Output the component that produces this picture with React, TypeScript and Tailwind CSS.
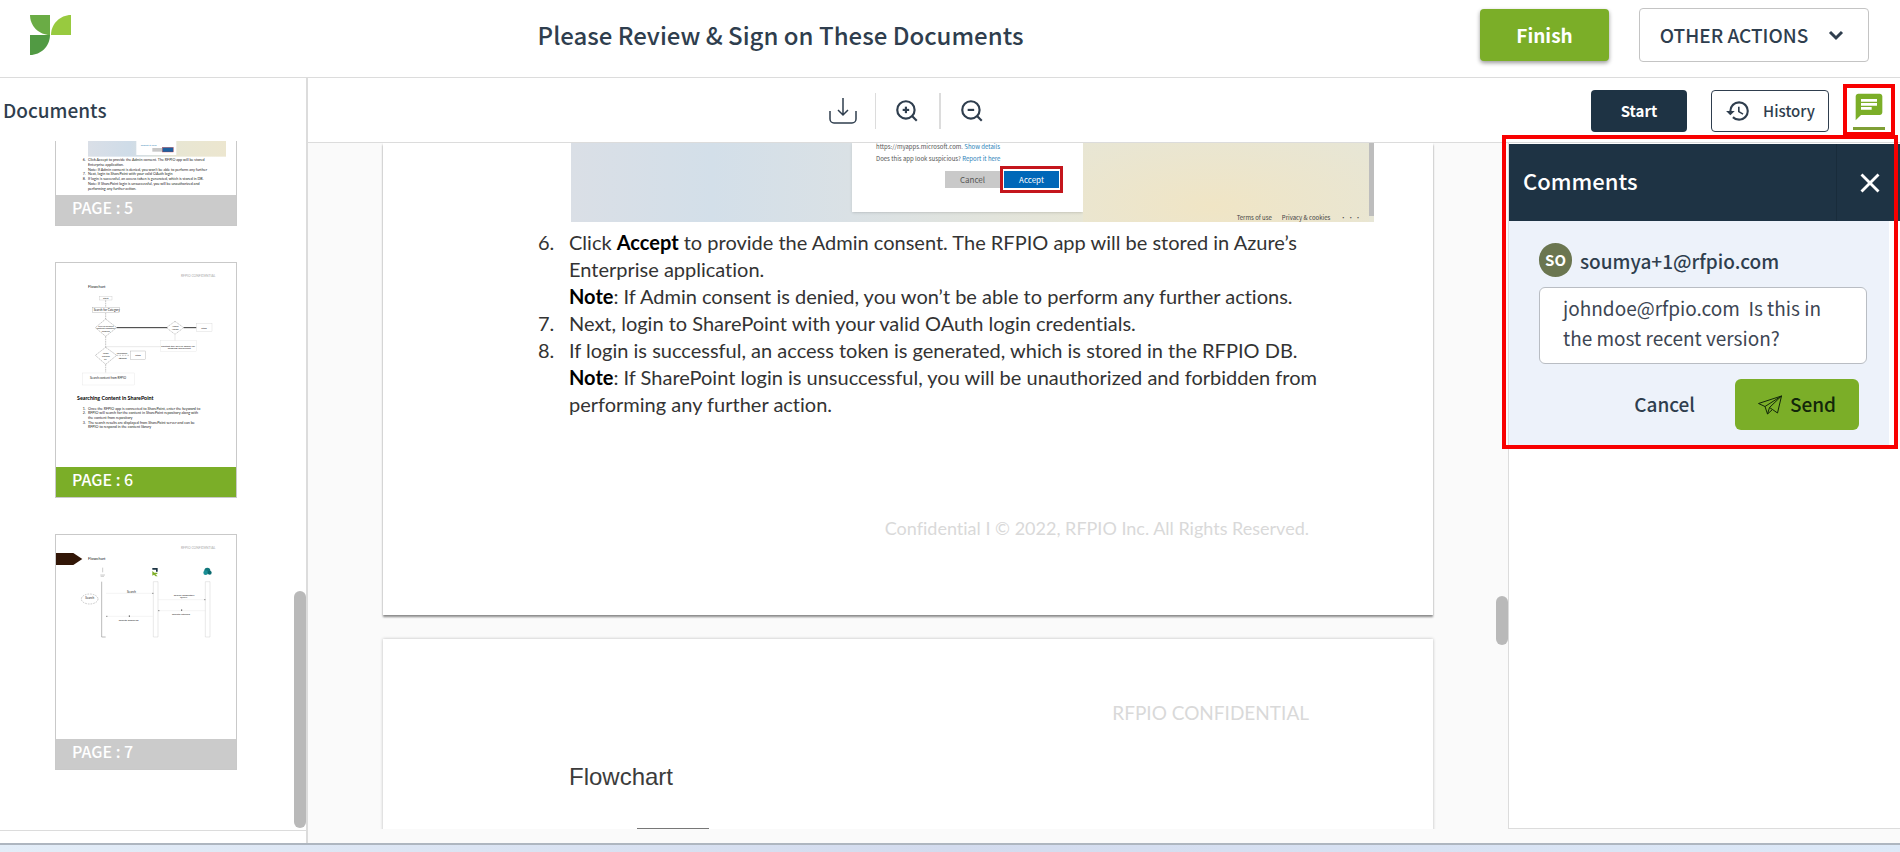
import React from 'react';
import { ChevronDown, X, ZoomIn, ZoomOut } from 'lucide-react';
import { MdChat, MdHistory } from 'react-icons/md';

type Thumb = {
    page: number;
    active: boolean;
    art: React.ReactNode;
};

function Logo() {
    return (
        <svg viewBox="0 0 41 41" className="w-[41px] h-[41px]" role="img" aria-label="RFPIO">
            <path d="M0 0h20v20C9 20 0 11 0 0z" fill="#6aac45" />
            <path d="M21 20C21 9 30 0 41 0v20z" fill="#98ca3f" />
            <path d="M0 20h20c0 11-9 20-20 20z" fill="#519a43" />
        </svg>
    );
}

function DownloadIcon() {
    return (
        <svg viewBox="0 0 28 28" className="w-7 h-7" fill="none" stroke="#2f3e4e" strokeWidth="1.5">
            <path d="M14 1v17M9 13l5 5 5-5" />
            <path d="M1 14v8a4 4 0 0 0 4 4h18a4 4 0 0 0 4-4v-8" />
        </svg>
    );
}

function PlaneIcon() {
    return (
        <svg viewBox="0 0 24 20" className="w-6 h-5" fill="none" stroke="#12260a" strokeWidth="1" strokeLinejoin="round">
            <path d="M0.5 8.5 23.5 1 19.5 18 14.5 14.5 9.5 19 7 11.5z" />
            <path d="M7 11.5 23.5 1 11.5 12.5 9.5 19M11.5 12.5l3 2" />
        </svg>
    );
}

function ArtConsent() {
    return (
        <svg viewBox="0 0 540 612" className="w-full h-full">
            <defs>
                <linearGradient id="sky" x1="0" x2="1">
                    <stop offset="0" stopColor="#dadfe7" />
                    <stop offset="0.3" stopColor="#cfdce8" />
                    <stop offset="0.65" stopColor="#e8e6d3" />
                    <stop offset="1" stopColor="#ece6cf" />
                </linearGradient>
            </defs>
            <rect x="96" y="300" width="414" height="197" fill="url(#sky)" />
            <rect x="241" y="330" width="120" height="162" fill="#fff" />
            <text x="254" y="465" fontSize="8" fontFamily="Lato, sans-serif" fill="#3a87b8">Report it here</text>
            <rect x="289" y="471" width="30" height="11" fill="#c8c8c8" />
            <rect x="319" y="469" width="33" height="14" fill="#1f5f9f" stroke="#c33" />
            <g fontSize="11" fontFamily="Lato, sans-serif" fill="#222">
                <text x="80" y="511">6.</text>
                <text x="96" y="511">Click Accept to provide the Admin consent. The RFPIO app will be stored</text>
                <text x="96" y="525">Enterprise application.</text>
                <text x="96" y="539">Note: If Admin consent is denied, you won’t be able to perform any further</text>
                <text x="80" y="553">7.</text>
                <text x="96" y="553">Next, login to SharePoint with your valid OAuth login</text>
                <text x="80" y="567">8.</text>
                <text x="96" y="567">If login is successful, an access token is generated, which is stored in DB.</text>
                <text x="96" y="581">Note: If SharePoint login is unsuccessful, you will be unauthorized and</text>
                <text x="96" y="596">performing any further action.</text>
            </g>
        </svg>
    );
}

function ArtFlow() {
    return (
        <svg viewBox="0 0 540 612" className="w-full h-full" fill="none">
            <g fontFamily="Lato, sans-serif" fill="#222">
                <text x="375" y="43" fontSize="10" fill="#aaa">RFPIO CONFIDENTIAL</text>
                <text x="96" y="76" fontSize="12">Flowchart</text>
                <text x="141" y="108" fontSize="8">Start</text>
                <text x="113" y="143" fontSize="9">Search for Category</text>
                <text x="127" y="191" fontSize="7">RFPIO SharePt</text>
                <text x="122" y="199" fontSize="7">content repository</text>
                <text x="137" y="207" fontSize="7">enabled</text>
                <text x="348" y="192" fontSize="7">Admin</text>
                <text x="347" y="200" fontSize="7">Access</text>
                <text x="436" y="197" fontSize="8">Stop</text>
                <text x="315" y="251" fontSize="8">Contact the RFPIO admin for</text>
                <text x="335" y="259" fontSize="8">enabling SharePoint</text>
                <text x="141" y="273" fontSize="7">Login</text>
                <text x="138" y="281" fontSize="7">success</text>
                <text x="144" y="290" fontSize="7">ful</text>
                <text x="182" y="272" fontSize="7">Unsuccess</text>
                <text x="188" y="287" fontSize="7">attempt</text>
                <text x="238" y="279" fontSize="8">Stop</text>
                <text x="102" y="349" fontSize="9">Search content from RFPIO</text>
                <text x="63" y="412" fontSize="16" fontWeight="700" fill="#000">Searching Content in SharePoint</text>
                <g fontSize="11">
                    <text x="80" y="440">1.</text>
                    <text x="96" y="440">Once the RFPIO app is connected to SharePoint, enter the keyword to</text>
                    <text x="80" y="454">2.</text>
                    <text x="96" y="454">RFPIO will search for the content in SharePoint repository along with</text>
                    <text x="96" y="468">the content from repository</text>
                    <text x="80" y="482">3.</text>
                    <text x="96" y="482">The search results are displayed from SharePoint server and can be</text>
                    <text x="96" y="496">RFPIO to respond in the content library</text>
                </g>
            </g>
            <g stroke="#555">
                <rect x="131" y="100" width="37" height="11" stroke="#bbb" />
                <rect x="110" y="134" width="80" height="15" stroke="#999" />
                <path d="M149 112v20M149 150v18M149 168l33 26-33 26-31-26zM149 220v33M149 253l33 24-33 27-31-27zM149 304v24" strokeDasharray="5 2" />
                <path d="M182 194h152M383 194h38" strokeWidth="3" stroke="#333" />
                <path d="M357 175l26 19-26 20-26-20z" strokeDasharray="4 2" />
                <rect x="421" y="182" width="47" height="24" stroke="#ccc" />
                <path d="M357 215v18M149 251h164" stroke="#bbb" />
                <rect x="313" y="233" width="108" height="32" stroke="#ddd" />
                <path d="M182 277h40" strokeDasharray="5 3" />
                <rect x="223" y="264" width="46" height="25" stroke="#999" />
                <rect x="80" y="330" width="156" height="36" stroke="#ddd" />
            </g>
        </svg>
    );
}

function ArtSequence() {
    return (
        <svg viewBox="0 0 540 612" className="w-full h-full" fill="none">
            <path d="M0 54h52l27 18-27 18H0z" fill="#321607" />
            <g fontFamily="Lato, sans-serif" fill="#222">
                <text x="375" y="43" fontSize="10" fill="#aaa">RFPIO CONFIDENTIAL</text>
                <text x="96" y="76" fontSize="12">Flowchart</text>
                <text x="88" y="193" fontSize="9">Search</text>
                <text x="213" y="174" fontSize="9">Search</text>
                <text x="353" y="182" fontSize="8">Search Repository</text>
                <text x="372" y="190" fontSize="8">Query</text>
                <text x="348" y="240" fontSize="8">Results fetched</text>
                <text x="188" y="258" fontSize="8">Results displayed</text>
            </g>
            <g stroke="#666">
                <ellipse cx="101" cy="192" rx="25" ry="15" strokeDasharray="5 3" />
                <path d="M140 98v14M133 120h14M134 124h10" />
                <path d="M137 140v166h12" stroke="#999" strokeWidth="2" />
                <path d="M292 140h14v166h-14zM448 140h14v166h-14z" stroke="#bbb" />
                <path d="M150 175h140M307 194h138M307 227h141M150 244h140" stroke="#ddd" />
                <path d="M289 175h3M445 194h3M307 227h3M151 244h3M377 223v5M220 241v5" strokeWidth="3" />
            </g>
            <path d="M289 99h16v11h-5v-6h-11z" fill="#1c3444" />
            <path d="M289 108l6 5h9v4l-6 1 7 6h-6l-5-5-5 3z" fill="#7dae26" />
            <circle cx="454" cy="107" r="9" fill="#11767b" />
            <circle cx="449" cy="113" r="7" fill="#1a8f95" />
            <circle cx="461" cy="113" r="6" fill="#0b6a70" />
        </svg>
    );
}

const thumbs: Thumb[] = [
    { page: 5, active: false, art: <ArtConsent /> },
    { page: 6, active: true, art: <ArtFlow /> },
    { page: 7, active: false, art: <ArtSequence /> }
];

function Sidebar() {
    return (
        <aside className="w-[308px] shrink-0 flex flex-col border-r-2 border-[#dcdcdc]">
            <h2 className="h-[63px] shrink-0 flex items-center pt-[2px] pl-[3px] text-[19px] font-medium">Documents</h2>
            <div className="relative flex-1 min-h-0 flex flex-col justify-end items-center gap-9 overflow-hidden pb-[60px] pr-[14px] border-b border-[#dcdcdc]">
                {thumbs.map((t) => (
                    <button key={t.page} className="w-[182px] shrink-0 border border-[#c9c9c9] bg-white text-left">
                        <span className="block h-[204px]">{t.art}</span>
                        <span
                            className={`block h-[30px] pl-4 text-[16px] leading-6 font-medium text-white ${t.active ? 'bg-[#7bae28]' : 'bg-[#cbcbcb]'}`}
                        >
                            PAGE : {t.page}
                        </span>
                    </button>
                ))}
                <div className="absolute right-0 bottom-[2px] w-3 h-[237px] rounded-full bg-[#b9b9b9]"></div>
            </div>
            <div className="h-3 shrink-0"></div>
        </aside>
    );
}

function ConsentShot() {
    return (
        <div className="ml-[188px] mr-[59px] h-[79px] flex bg-[#e7e6d6]">
            <div className="w-[281px] shrink-0 bg-linear-to-r from-[#dadfe6] via-[#d3dfe9] to-[#dae1e5]"></div>
            <div className="w-[231px] shrink-0 bg-linear-to-r from-[#dae1e5] to-[#e7e6d6]">
                <div className="h-[69px] bg-white shadow pl-6 text-[#555]">
                    <div className="flex flex-col gap-1 h-[23px] text-[6px] leading-[8px] whitespace-nowrap">
                        <p>
                            https://myapps.microsoft.com. <a href="#details" className="text-[#2b7fb8]">Show details</a>
                        </p>
                        <p>
                            Does this app look suspicious? <a href="#report" className="text-[#2b7fb8]">Report it here</a>
                        </p>
                    </div>
                    <div className="flex items-center justify-end pr-5 text-[8px]">
                        <button className="w-[55px] h-[17px] bg-[#c9c9c9] text-center">Cancel</button>
                        <div className="border-3 border-[#c4161c] px-px py-[2px] h-[27px]">
                            <button className="w-[55px] h-[17px] block bg-[#0067b8] text-white text-center">Accept</button>
                        </div>
                    </div>
                </div>
            </div>
            <div className="flex-1 flex items-end justify-end gap-[10px] pr-2 text-[6px] leading-[8px] text-[#444] bg-radial-[at_45%_80%] from-[#f0e5c5] to-[#e7e6d6]">
                <span>Terms of use</span>
                <span>Privacy &amp; cookies</span>
                <span>• • •</span>
            </div>
            <div className="w-[5px] h-[73px] bg-[#bdbdbd]"></div>
        </div>
    );
}

function Viewer() {
    return (
        <main className="relative flex-1 min-w-0 bg-[#fafafa] mb-[14px] overflow-hidden flex flex-col gap-6 px-[75px] text-[#333]">
            <section className="shrink-0 bg-white pb-[73px] shadow-[0_2px_2px_rgba(0,0,0,0.45)]">
                <ConsentShot />
                <ol className="pl-[155px] pr-[124px] pt-[7px] text-[20px] leading-[27px] font-[Lato,sans-serif] [font-variant-ligatures:none]">
                    <li className="flex">
                        <span className="w-[31px] shrink-0">6.</span>
                        <p className="whitespace-nowrap">
                            Click <b className="text-black">Accept</b> to provide the Admin consent. The RFPIO app will be stored in Azure’s<br />
                            Enterprise application.<br />
                            <b className="text-black">Note</b>: If Admin consent is denied, you won’t be able to perform any further actions.
                        </p>
                    </li>
                    <li className="flex">
                        <span className="w-[31px] shrink-0">7.</span>
                        <p className="whitespace-nowrap">Next, login to SharePoint with your valid OAuth login credentials.</p>
                    </li>
                    <li className="flex">
                        <span className="w-[31px] shrink-0">8.</span>
                        <p className="whitespace-nowrap">
                            If login is successful, an access token is generated, which is stored in the RFPIO DB.<br />
                            <b className="text-black">Note</b>: If SharePoint login is unsuccessful, you will be unauthorized and forbidden from<br />
                            performing any further action.
                        </p>
                    </li>
                </ol>
                <p className="pt-24 pr-[124px] text-right text-[18px] leading-7 text-[#d9d9d9] font-[Lato,sans-serif] [font-variant-ligatures:none]">
                    Confidential I © 2022, RFPIO Inc. All Rights Reserved.
                </p>
            </section>

            <section className="flex-1 bg-white shadow-[0_0_3px_rgba(0,0,0,0.25)]">
                <p className="pt-[60px] pr-[124px] text-right text-[19px] leading-7 text-[#d9d9d9] font-[Lato,sans-serif]">RFPIO CONFIDENTIAL</p>
                <h3 className="pt-9 pl-[186px] text-[24px] leading-7 font-['Liberation_Sans',sans-serif] text-[#3c3c3c]">Flowchart</h3>
                <div className="mt-[37px] ml-[254px] w-[72px] h-10 border border-[#777]"></div>
            </section>

            <div className="absolute right-0 top-[453px] w-3 h-[49px] rounded-full bg-[#b9b9b9]"></div>
        </main>
    );
}

function Comments() {
    return (
        <aside className="relative w-[392px] shrink-0 mb-[14px] border-l border-b border-[#dcdcdc] bg-white">
            <div className="mt-px h-[77px] flex items-center bg-[#1e3344] text-white">
                <h2 className="flex-1 pl-[14px] pb-1 text-[22px] font-medium">Comments</h2>
                <button aria-label="Close" className="h-full w-16 flex items-center pl-4 border-l border-[#192c3b]">
                    <X className="w-[34px] h-[34px]" strokeWidth={2} strokeLinecap="butt" />
                </button>
            </div>
            <form className="mr-[11px] bg-[#edf2fa] pt-[22px] pb-4 pl-[30px] pr-[22px]">
                <label htmlFor="comment" className="flex items-center gap-2 text-[19px] font-medium">
                    <span className="w-[33px] h-[34px] rounded-full bg-[#6b7650] text-white text-[15px] font-bold flex items-center justify-center">SO</span>
                    <span className="pt-[2px]">soumya+1@rfpio.com</span>
                </label>
                <textarea
                    id="comment"
                    className="block mt-[10px] w-full h-[77px] resize-none overflow-hidden rounded-md border border-[#b9bdc3] bg-white px-[23px] py-[5px] text-[19px] leading-[30px] text-[#3d4653]"
                    defaultValue="johndoe@rfpio.com  Is this in the most recent version?"
                />
                <div className="mt-[15px] pr-2 flex justify-end items-center gap-10 text-[19px] font-medium">
                    <button type="button">Cancel</button>
                    <button type="button" className="w-[124px] h-[51px] rounded-md bg-[#7bae28] text-[#12260a] flex items-center justify-center gap-2">
                        <PlaneIcon />
                        Send
                    </button>
                </div>
            </form>
            <div className="pointer-events-none absolute -left-[7px] right-[2px] -top-2 h-[314px] border-4 border-[#f80000]"></div>
        </aside>
    );
}

function App() {
    return (
        <div className="h-screen flex flex-col bg-white overflow-hidden font-['Noto_Sans_CJK_SC',sans-serif] text-[#2f3e4e]">
            <header className="h-[78px] shrink-0 flex items-center pl-[30px] pr-[31px] pb-[7px] border-b border-[#dcdcdc]">
                <Logo />
                <h1 className="flex-1 pl-[10px] text-center text-[24px] font-medium">Please Review &amp; Sign on These Documents</h1>
                <button className="w-[129px] h-[52px] rounded bg-[#7bae28] text-white text-[19px] font-bold shadow-[0_2px_4px_rgba(0,0,0,0.4)]">
                    Finish
                </button>
                <button className="ml-[30px] w-[230px] h-[54px] rounded border border-[#c4c4c4] text-[19px] font-medium flex items-center justify-center gap-4">
                    OTHER ACTIONS
                    <ChevronDown className="w-6 h-6" strokeWidth={3} strokeLinecap="butt" strokeLinejoin="miter" />
                </button>
            </header>

            <div className="flex-1 min-h-0 flex">
                <Sidebar />
                <div className="flex-1 min-w-0 flex flex-col">
                    <div className="h-[65px] shrink-0 flex items-center border-b border-[#dcdcdc] pt-[2px] pr-[15px]">
                        <div className="flex-1 flex justify-center items-center pr-[86px]">
                            <button aria-label="Download" className="w-16 h-9 flex items-center justify-center">
                                <DownloadIcon />
                            </button>
                            <button aria-label="Zoom in" className="w-16 h-9 flex items-center justify-center border-l border-[#dcdcdc]">
                                <ZoomIn className="w-[26px] h-[26px]" strokeWidth={2} strokeLinecap="butt" />
                            </button>
                            <button aria-label="Zoom out" className="w-16 h-9 flex items-center justify-center border-l-2 border-[#dcdcdc]">
                                <ZoomOut className="w-[26px] h-[26px]" strokeWidth={2} strokeLinecap="butt" />
                            </button>
                        </div>
                        <button className="w-24 h-[42px] rounded bg-[#1e3344] text-white text-[15px] font-bold">Start</button>
                        <button className="ml-6 w-[118px] h-[42px] rounded border border-[#2f3e4e] text-[15px] font-medium flex items-center justify-center gap-3">
                            <MdHistory className="w-[26px] h-[26px]" />
                            History
                        </button>
                        <div className="relative ml-6 w-8 h-10">
                            <button aria-label="Comments" className="block border-b-3 border-[#7f9f35] pb-1 text-[#7bae28]">
                                <MdChat className="w-8 h-8" />
                            </button>
                            <div className="pointer-events-none absolute -inset-x-[10px] -top-[7px] h-[52px] border-4 border-[#f80000]"></div>
                        </div>
                    </div>
                    <div className="flex-1 min-h-0 flex bg-[#fafafa]">
                        <Viewer />
                        <Comments />
                    </div>
                </div>
            </div>

            <footer className="h-[9px] shrink-0 border-t-2 border-[#aeb6c0] bg-linear-to-r from-[#e3edf8] via-[#d3dbee] to-[#dde9f8]"></footer>
        </div>
    );
}

export default App;
